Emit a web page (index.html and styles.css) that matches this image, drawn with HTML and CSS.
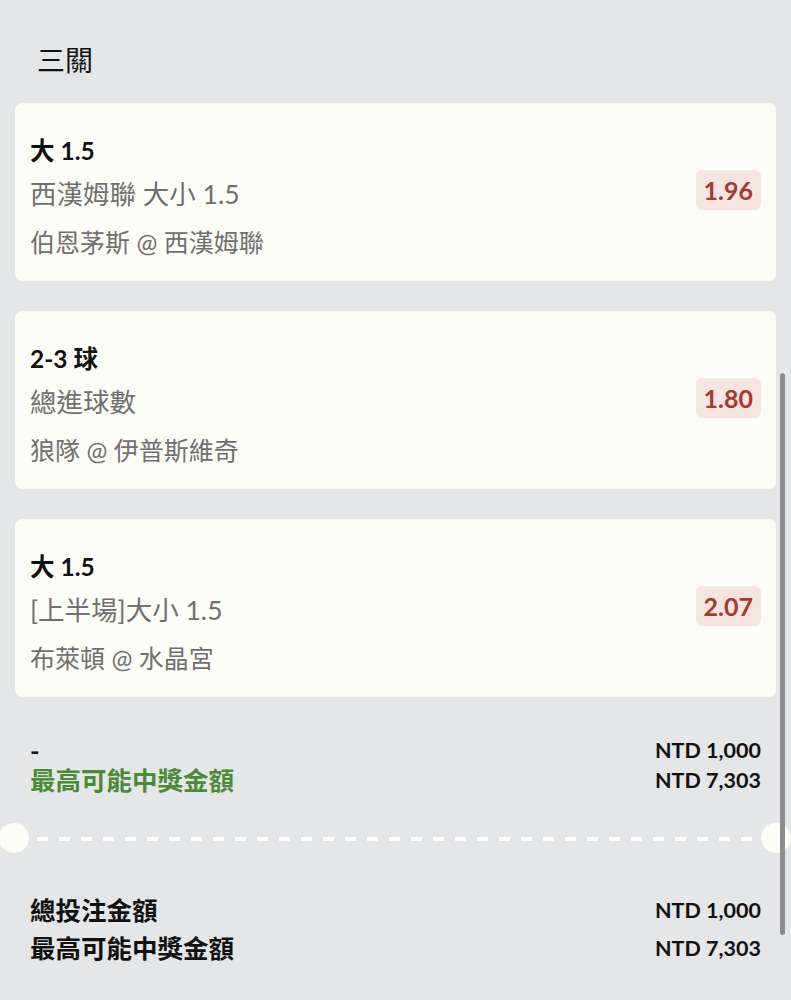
FILE: index.html
```html
<!DOCTYPE html>
<html lang="zh-Hant">
<head>
    <meta charset="UTF-8">
    <meta name="viewport" content="width=device-width, initial-scale=1.0">
    <title>三關</title>
    <link rel="stylesheet" href="styles.css">
</head>
<body>
    <div class="slip">
        <h1 class="slip-title">三關</h1>

        <div class="bets">
            <div class="bet-card">
                <div class="bet-info">
                    <div class="bet-pick">大 1.5</div>
                    <div class="bet-market">西漢姆聯 大小 1.5</div>
                    <div class="bet-match">伯恩茅斯 @ 西漢姆聯</div>
                </div>
                <div class="odds">1.96</div>
            </div>

            <div class="bet-card">
                <div class="bet-info">
                    <div class="bet-pick">2-3 球</div>
                    <div class="bet-market">總進球數</div>
                    <div class="bet-match">狼隊 @ 伊普斯維奇</div>
                </div>
                <div class="odds">1.80</div>
            </div>

            <div class="bet-card">
                <div class="bet-info">
                    <div class="bet-pick">大 1.5</div>
                    <div class="bet-market">[上半場]大小 1.5</div>
                    <div class="bet-match">布萊頓 @ 水晶宮</div>
                </div>
                <div class="odds">2.07</div>
            </div>
        </div>

        <div class="summary">
            <div class="summary-row">
                <span>-</span>
                <span class="amount">NTD 1,000</span>
            </div>
            <div class="summary-row">
                <span class="win-label">最高可能中獎金額</span>
                <span class="amount">NTD 7,303</span>
            </div>
        </div>

        <div class="divider">
            <span class="notch"></span>
            <span class="dashes"></span>
            <span class="notch"></span>
        </div>

        <div class="totals">
            <div class="totals-row">
                <span>總投注金額</span>
                <span class="amount">NTD 1,000</span>
            </div>
            <div class="totals-row">
                <span>最高可能中獎金額</span>
                <span class="amount">NTD 7,303</span>
            </div>
        </div>

        <div class="scrollbar"></div>
    </div>
</body>
</html>
```

FILE: styles.css
```css
:root {
    --bg-color: #e5e6e8;
    --card-color: #fdfdf7;
    --text-color: #111;
    --muted-color: #707070;
    --odds-color: #a63a2e;
    --odds-bg: #f4e6df;
    --win-color: #4d8a38;
}

body {
    margin: 0;
    background-color: var(--bg-color);
    color: var(--text-color);
    font-family: Lato, "Noto Sans CJK TC", sans-serif;
}

.slip {
    position: relative;
    height: 1000px;
    padding: 0 15px;
    box-sizing: border-box;
    overflow: hidden;
}

.slip-title {
    margin: 0;
    padding: 41px 0 24px 22px;
    font-size: 28px;
    line-height: 38px;
    font-weight: 400;
}

.bets {
    display: flex;
    flex-direction: column;
    gap: 30px;
}

.bet-card {
    display: flex;
    justify-content: space-between;
    align-items: center;
    height: 178px;
    padding: 0 15px;
    box-sizing: border-box;
    background-color: var(--card-color);
    border-radius: 8px;
}

.bet-info {
    padding-top: 12px;
}

.bet-pick {
    font-size: 24.5px;
    font-weight: 700;
    line-height: 32px;
}

.bet-market,
.bet-match {
    color: var(--muted-color);
    line-height: 40px;
}

.bet-market {
    margin-top: 7px;
    font-size: 26.5px;
}

.bet-match {
    margin-top: 8px;
    font-size: 25px;
}

.odds {
    margin-top: -4px;
    padding: 0 8px;
    height: 40px;
    line-height: 40px;
    border-radius: 6px;
    background-color: var(--odds-bg);
    color: var(--odds-color);
    font-size: 25px;
    font-weight: 700;
}

.summary {
    padding: 38px 15px 0;
}

.summary-row,
.totals-row {
    display: flex;
    justify-content: space-between;
    align-items: center;
    font-size: 25.5px;
    font-weight: 700;
    line-height: 30px;
}

.amount {
    font-size: 21.5px;
}

.win-label {
    color: var(--win-color);
}

.divider {
    display: flex;
    align-items: center;
    margin: 28px -15px 0;
    height: 30px;
}

.notch {
    flex: none;
    width: 30px;
    height: 30px;
    border-radius: 50%;
    background-color: var(--card-color);
}

.notch:first-child {
    margin-left: -1px;
}

.dashes {
    flex: 1;
    height: 4px;
    margin: 2px 6px 0 8px;
    background-image: linear-gradient(to right, #fff 11px, transparent 11px);
    background-size: 22px 4px;
}

.totals {
    padding: 38px 15px 0;
}

.totals-row {
    line-height: 38px;
}

.scrollbar {
    position: absolute;
    right: 6px;
    top: 373px;
    width: 5px;
    height: 562px;
    border-radius: 3px;
    background-color: #8d8d8f;
}
```
